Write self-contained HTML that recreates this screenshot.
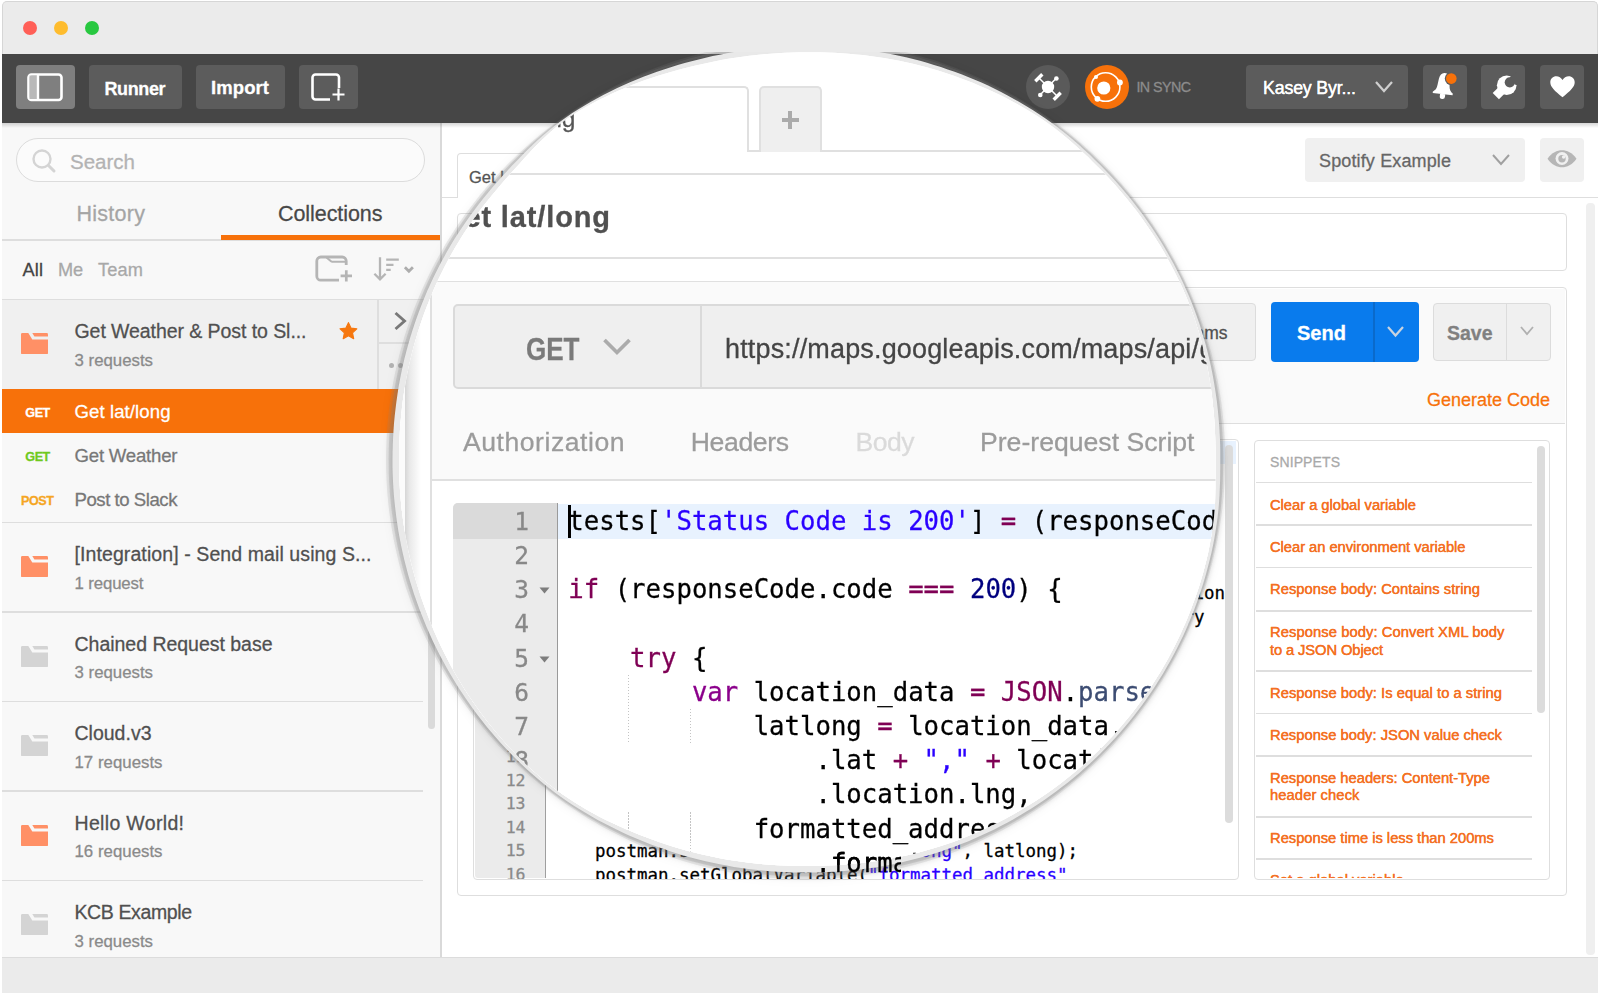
<!DOCTYPE html>
<html lang="en"><head><meta charset="utf-8"><title>Postman</title>
<style>
html,body{margin:0;padding:0;}
body{width:1600px;height:993px;background:#fff;position:relative;overflow:hidden;font-family:"Liberation Sans", sans-serif;}
#base,#magwrap,#mag2,#mag1,#mag,#magin{position:absolute;left:0;top:0;width:1600px;height:993px;}
#base div,#base span.t,#base svg,#magin div,#magin span.t,#magin svg{position:absolute;}
#base div,#magin div{box-sizing:border-box;}
span.t{line-height:1;white-space:pre;-webkit-text-stroke-width:.28px;}
#magclip{position:absolute;left:0;top:52px;width:1600px;height:941px;overflow:hidden;}
#magwrap{top:-52px !important;filter:drop-shadow(1px 1px 2.5px rgba(0,0,0,.14)) drop-shadow(0 1px 5px rgba(0,0,0,.10));}
#mag2{background:rgba(135,135,135,.16);clip-path:path('M1225.2 459.7L1225.1 452.4L1224.9 445.1L1224.6 437.7L1224.2 430.4L1223.6 423.1L1222.9 415.8L1222.1 408.6L1221.1 401.3L1220.0 394.1L1218.8 386.8L1217.5 379.6L1216.0 372.5L1214.4 365.3L1212.7 358.2L1210.9 351.1L1208.9 344.0L1206.9 337.0L1204.7 330.0L1202.3 323.1L1199.9 316.2L1197.3 309.3L1194.6 302.5L1191.8 295.7L1188.9 289.0L1185.9 282.4L1182.7 275.8L1179.5 269.2L1176.1 262.7L1172.6 256.3L1169.0 249.9L1165.3 243.6L1161.4 237.3L1157.5 231.2L1153.5 225.1L1149.3 219.0L1145.1 213.1L1140.7 207.2L1136.2 201.4L1131.7 195.6L1127.0 190.0L1122.3 184.4L1117.4 178.9L1112.5 173.5L1107.4 168.2L1102.3 163.0L1097.1 157.9L1091.8 152.8L1086.4 147.9L1080.9 143.0L1075.3 138.3L1069.7 133.6L1063.9 129.1L1058.1 124.6L1052.2 120.2L1046.3 116.0L1040.2 111.8L1034.1 107.8L1028.0 103.9L1021.7 100.0L1015.4 96.3L1009.0 92.7L1002.6 89.2L996.1 85.8L989.5 82.6L982.9 79.4L976.3 76.4L969.6 73.5L962.8 70.7L956.0 68.0L949.1 65.4L942.2 63.0L935.3 60.6L928.3 58.4L921.3 56.4L914.2 54.4L907.1 52.6L900.0 50.9L892.8 49.3L885.7 47.8L878.5 46.5L871.2 45.3L864.0 44.2L856.7 43.2L849.5 42.4L842.2 41.7L834.9 41.1L827.6 40.7L820.2 40.4L812.9 40.2L805.6 40.1L798.3 40.2L791.0 40.4L783.6 40.7L776.3 41.1L769.0 41.7L761.7 42.4L754.5 43.2L747.2 44.2L740.0 45.3L732.7 46.5L725.5 47.8L718.4 49.3L711.2 50.9L704.1 52.6L697.0 54.4L689.9 56.4L682.9 58.4L675.9 60.6L669.0 63.0L662.1 65.4L655.2 68.0L648.4 70.7L641.6 73.5L634.9 76.4L628.3 79.4L621.7 82.6L615.1 85.8L608.6 89.2L602.2 92.7L595.8 96.3L589.5 100.0L583.2 103.9L577.1 107.8L571.0 111.8L564.9 116.0L559.0 120.2L553.1 124.6L547.3 129.1L541.5 133.6L535.9 138.3L530.3 143.0L524.8 147.9L519.4 152.8L514.1 157.9L508.9 163.0L503.8 168.2L498.7 173.5L493.8 178.9L488.9 184.4L484.2 190.0L479.5 195.6L475.0 201.4L470.5 207.2L466.1 213.1L461.9 219.0L457.7 225.1L453.7 231.2L449.8 237.3L445.9 243.6L442.2 249.9L438.6 256.3L435.1 262.7L431.7 269.2L428.5 275.8L425.3 282.4L422.3 289.0L419.4 295.7L416.6 302.5L413.9 309.3L411.3 316.2L408.9 323.1L406.5 330.0L404.3 337.0L402.3 344.0L400.3 351.1L398.5 358.2L396.8 365.3L395.2 372.5L393.7 379.6L392.4 386.8L391.2 394.1L390.1 401.3L389.1 408.6L388.3 415.8L387.6 423.1L387.0 430.4L386.6 437.7L386.3 445.1L386.1 452.4L386.0 459.7L386.1 467.0L386.3 474.3L386.6 481.7L387.0 489.0L387.6 496.3L388.3 503.6L389.1 510.8L390.1 518.1L391.2 525.3L392.4 532.6L393.7 539.8L395.2 546.9L396.8 554.1L398.5 561.2L400.3 568.3L402.3 575.4L404.3 582.4L406.5 589.4L408.9 596.3L411.3 603.2L413.9 610.1L416.6 616.9L419.4 623.7L422.3 630.4L425.3 637.0L428.5 643.6L431.7 650.2L435.1 656.7L438.6 663.1L442.2 669.5L445.9 675.8L449.8 682.1L453.7 688.2L457.7 694.3L461.9 700.4L466.1 706.3L470.5 712.2L475.0 718.0L479.5 723.8L484.2 729.4L488.9 735.0L493.8 740.5L498.7 745.9L503.8 751.2L508.9 756.4L514.1 761.5L519.4 766.6L524.8 771.5L530.3 776.4L535.9 781.1L541.5 785.8L547.3 790.3L553.1 794.8L559.0 799.2L564.9 803.4L571.0 807.6L577.1 811.6L583.2 815.5L589.5 819.4L595.8 823.1L602.2 826.7L608.6 830.2L615.1 833.6L621.7 836.8L628.3 840.0L634.9 843.0L641.6 845.9L648.4 848.7L655.2 851.4L662.1 854.0L669.0 856.4L675.9 858.8L682.9 861.0L689.9 863.0L697.0 865.0L704.1 866.8L711.2 868.5L718.4 870.1L725.5 871.6L732.7 872.9L740.0 874.1L747.2 875.2L754.5 876.2L761.7 877.0L769.0 877.7L776.3 878.3L783.6 878.7L791.0 879.0L798.3 879.2L805.6 879.3L812.9 879.2L820.2 879.0L827.6 878.7L834.9 878.3L842.2 877.7L849.5 877.0L856.7 876.2L864.0 875.2L871.2 874.1L878.5 872.9L885.7 871.6L892.8 870.1L900.0 868.5L907.1 866.8L914.2 865.0L921.3 863.0L928.3 861.0L935.3 858.8L942.2 856.4L949.1 854.0L956.0 851.4L962.8 848.7L969.6 845.9L976.3 843.0L982.9 840.0L989.5 836.8L996.1 833.6L1002.6 830.2L1009.0 826.7L1015.4 823.1L1021.7 819.4L1028.0 815.5L1034.1 811.6L1040.2 807.6L1046.3 803.4L1052.2 799.2L1058.1 794.8L1063.9 790.3L1069.7 785.8L1075.3 781.1L1080.9 776.4L1086.4 771.5L1091.8 766.6L1097.1 761.5L1102.3 756.4L1107.4 751.2L1112.5 745.9L1117.4 740.5L1122.3 735.0L1127.0 729.4L1131.7 723.8L1136.2 718.0L1140.7 712.2L1145.1 706.3L1149.3 700.4L1153.5 694.3L1157.5 688.2L1161.4 682.1L1165.3 675.8L1169.0 669.5L1172.6 663.1L1176.1 656.7L1179.5 650.2L1182.7 643.6L1185.9 637.0L1188.9 630.4L1191.8 623.7L1194.6 616.9L1197.3 610.1L1199.9 603.2L1202.3 596.3L1204.7 589.4L1206.9 582.4L1208.9 575.4L1210.9 568.3L1212.7 561.2L1214.4 554.1L1216.0 546.9L1217.5 539.8L1218.8 532.6L1220.0 525.3L1221.1 518.1L1222.1 510.8L1222.9 503.6L1223.6 496.3L1224.2 489.0L1224.6 481.7L1224.9 474.3L1225.1 467.0Z');}
#mag1{background:rgba(135,135,135,.24);clip-path:path('M1223.3 459.6L1223.2 452.3L1223.0 445.0L1222.7 437.7L1222.3 430.4L1221.8 423.2L1221.1 415.9L1220.3 408.6L1219.4 401.4L1218.4 394.2L1217.2 387.0L1215.9 379.8L1214.5 372.7L1213.0 365.5L1211.3 358.4L1209.6 351.3L1207.6 344.3L1205.6 337.3L1203.4 330.3L1201.2 323.4L1198.8 316.5L1196.2 309.6L1193.6 302.8L1190.8 296.1L1187.9 289.4L1184.9 282.7L1181.7 276.2L1178.5 269.6L1175.1 263.1L1171.6 256.7L1168.0 250.4L1164.3 244.1L1160.5 237.9L1156.5 231.7L1152.5 225.6L1148.4 219.6L1144.1 213.7L1139.8 207.8L1135.3 202.0L1130.8 196.3L1126.1 190.7L1121.4 185.1L1116.5 179.7L1111.6 174.3L1106.6 169.0L1101.4 163.8L1096.2 158.7L1091.0 153.6L1085.6 148.7L1080.2 143.8L1074.6 139.1L1069.0 134.4L1063.3 129.8L1057.5 125.4L1051.6 121.0L1045.7 116.8L1039.7 112.7L1033.5 108.7L1027.4 104.8L1021.1 101.0L1014.8 97.3L1008.4 93.8L1002.0 90.3L995.5 87.0L989.0 83.8L982.3 80.7L975.7 77.7L969.0 74.9L962.2 72.1L955.4 69.5L948.6 67.0L941.7 64.6L934.8 62.3L927.8 60.2L920.8 58.1L913.8 56.2L906.7 54.5L899.6 52.8L892.5 51.3L885.3 49.9L878.1 48.6L871.0 47.4L863.8 46.4L856.5 45.5L849.3 44.7L842.0 44.0L834.8 43.5L827.5 43.0L820.2 42.7L813.0 42.6L805.7 42.5L798.4 42.6L791.1 42.8L783.9 43.1L776.6 43.5L769.3 44.1L762.1 44.8L754.8 45.6L747.6 46.5L740.4 47.6L733.2 48.7L726.1 50.0L718.9 51.4L711.8 53.0L704.7 54.6L697.7 56.4L690.6 58.3L683.6 60.3L676.6 62.4L669.7 64.7L662.8 67.0L655.9 69.5L649.1 72.1L642.3 74.8L635.6 77.6L628.9 80.6L622.3 83.6L615.8 86.8L609.2 90.1L602.8 93.5L596.4 97.1L590.1 100.7L583.8 104.5L577.6 108.4L571.5 112.4L565.5 116.5L559.5 120.7L553.7 125.1L547.9 129.6L542.3 134.3L536.7 139.0L531.2 143.8L525.8 148.8L520.5 153.8L515.3 158.9L510.2 164.1L505.1 169.3L500.1 174.6L495.2 180.0L490.4 185.5L485.7 191.1L481.1 196.7L476.5 202.4L472.1 208.2L467.8 214.1L463.6 220.0L459.4 226.0L455.4 232.1L451.5 238.3L447.7 244.5L444.0 250.8L440.5 257.1L437.0 263.5L433.7 270.0L430.4 276.5L427.3 283.1L424.3 289.8L421.4 296.5L418.7 303.2L416.0 310.0L413.5 316.8L411.1 323.7L408.8 330.6L406.6 337.5L404.5 344.5L402.6 351.6L400.8 358.6L399.1 365.7L397.6 372.8L396.1 380.0L394.8 387.1L393.7 394.3L392.6 401.5L391.7 408.7L390.9 416.0L390.2 423.2L389.6 430.5L389.2 437.7L388.9 445.0L388.7 452.3L388.6 459.6L388.7 466.8L388.8 474.1L389.1 481.4L389.6 488.7L390.1 495.9L390.8 503.2L391.6 510.4L392.6 517.6L393.6 524.8L394.8 532.0L396.1 539.2L397.5 546.3L399.1 553.4L400.8 560.5L402.6 567.6L404.5 574.6L406.5 581.6L408.7 588.6L411.0 595.5L413.4 602.3L415.9 609.2L418.5 616.0L421.3 622.7L424.2 629.4L427.2 636.1L430.3 642.7L433.5 649.2L436.8 655.7L440.2 662.1L443.8 668.5L447.5 674.8L451.2 681.0L455.1 687.2L459.1 693.3L463.2 699.4L467.4 705.3L471.7 711.2L476.1 717.0L480.7 722.8L485.3 728.4L490.0 734.0L494.8 739.5L499.7 744.9L504.7 750.2L509.8 755.5L515.0 760.6L520.2 765.6L525.6 770.6L531.1 775.5L536.6 780.2L542.3 784.9L548.0 789.4L553.8 793.9L559.7 798.2L565.6 802.4L571.7 806.5L577.8 810.5L584.0 814.4L590.2 818.1L596.5 821.8L602.9 825.3L609.4 828.8L615.9 832.1L622.4 835.3L629.0 838.4L635.7 841.3L642.4 844.2L649.2 846.9L656.0 849.5L662.8 852.1L669.7 854.4L676.6 856.7L683.6 858.9L690.6 860.9L697.6 862.8L704.7 864.6L711.8 866.3L718.9 867.8L726.1 869.2L733.2 870.5L740.4 871.7L747.6 872.7L754.8 873.6L762.1 874.4L769.3 875.1L776.6 875.7L783.9 876.1L791.1 876.4L798.4 876.6L805.7 876.6L813.0 876.6L820.2 876.4L827.5 876.1L834.8 875.7L842.0 875.1L849.3 874.5L856.5 873.7L863.7 872.7L871.0 871.7L878.1 870.5L885.3 869.2L892.5 867.8L899.6 866.3L906.7 864.6L913.7 862.8L920.8 860.9L927.8 858.9L934.7 856.7L941.7 854.5L948.5 852.1L955.4 849.5L962.2 846.9L968.9 844.1L975.6 841.2L982.3 838.2L988.9 835.1L995.4 831.9L1001.9 828.5L1008.3 825.1L1014.7 821.5L1021.0 817.8L1027.2 814.1L1033.4 810.2L1039.5 806.1L1045.5 802.0L1051.4 797.8L1057.3 793.5L1063.1 789.1L1068.8 784.5L1074.5 779.9L1080.1 775.2L1085.5 770.4L1090.9 765.4L1096.2 760.4L1101.4 755.3L1106.6 750.1L1111.6 744.8L1116.5 739.5L1121.4 734.0L1126.1 728.5L1130.8 722.8L1135.3 717.1L1139.8 711.3L1144.1 705.5L1148.4 699.5L1152.5 693.5L1156.5 687.4L1160.5 681.3L1164.3 675.0L1168.0 668.7L1171.6 662.4L1175.1 656.0L1178.4 649.5L1181.7 643.0L1184.8 636.4L1187.9 629.7L1190.8 623.0L1193.6 616.3L1196.2 609.5L1198.8 602.6L1201.2 595.8L1203.5 588.8L1205.7 581.9L1207.8 574.9L1209.7 567.8L1211.5 560.7L1213.2 553.6L1214.8 546.5L1216.2 539.4L1217.5 532.2L1218.7 525.0L1219.7 517.7L1220.6 510.5L1221.3 503.2L1221.9 496.0L1222.4 488.7L1222.8 481.4L1223.1 474.1L1223.2 466.8Z');}
#mag{background:#e9e9e9;clip-path:path('M1220.3 459.4L1220.3 452.1L1220.2 444.9L1219.9 437.6L1219.5 430.4L1219.0 423.2L1218.4 416.0L1217.7 408.8L1216.9 401.6L1215.9 394.4L1214.8 387.2L1213.6 380.1L1212.3 373.0L1210.8 365.8L1209.2 358.8L1207.5 351.7L1205.7 344.7L1203.7 337.7L1201.6 330.7L1199.4 323.8L1197.0 317.0L1194.5 310.1L1191.9 303.3L1189.2 296.6L1186.3 289.9L1183.3 283.3L1180.2 276.8L1176.9 270.2L1173.6 263.8L1170.1 257.4L1166.5 251.1L1162.8 244.8L1159.0 238.6L1155.1 232.5L1151.1 226.5L1146.9 220.5L1142.7 214.6L1138.3 208.8L1133.9 203.0L1129.4 197.3L1124.7 191.7L1120.0 186.2L1115.2 180.8L1110.3 175.4L1105.3 170.2L1100.2 165.0L1095.0 159.9L1089.8 154.8L1084.4 149.9L1079.1 145.0L1073.6 140.2L1068.0 135.6L1062.3 131.0L1056.6 126.5L1050.8 122.2L1044.8 118.0L1038.8 113.9L1032.7 110.0L1026.5 106.2L1020.2 102.4L1013.9 98.9L1007.6 95.4L1001.1 92.0L994.6 88.8L988.1 85.6L981.5 82.6L974.8 79.8L968.1 77.0L961.4 74.3L954.6 71.8L947.7 69.4L940.9 67.1L934.0 64.9L927.0 62.8L920.1 60.8L913.1 59.0L906.0 57.3L899.0 55.7L891.9 54.3L884.8 52.9L877.7 51.7L870.5 50.6L863.4 49.7L856.2 48.8L849.0 48.1L841.8 47.5L834.6 47.0L827.4 46.6L820.2 46.3L813.0 46.2L805.8 46.1L798.6 46.2L791.4 46.4L784.2 46.7L777.0 47.2L769.8 47.7L762.6 48.3L755.4 49.1L748.3 50.0L741.1 51.0L734.0 52.1L726.9 53.3L719.8 54.7L712.7 56.1L705.7 57.7L698.6 59.4L691.6 61.2L684.7 63.1L677.7 65.1L670.8 67.2L663.9 69.4L657.0 71.7L650.2 74.2L643.4 76.8L636.7 79.4L630.0 82.3L623.3 85.2L616.7 88.3L610.2 91.5L603.7 94.8L597.3 98.2L590.9 101.7L584.6 105.4L578.4 109.2L572.3 113.1L566.3 117.2L560.3 121.5L554.5 125.9L548.9 130.5L543.3 135.2L537.9 140.1L532.6 145.0L527.3 150.1L522.2 155.2L517.1 160.4L512.1 165.6L507.1 170.9L502.2 176.3L497.4 181.7L492.7 187.1L488.0 192.7L483.4 198.3L478.9 204.0L474.6 209.7L470.3 215.6L466.1 221.5L462.0 227.4L458.0 233.5L454.1 239.6L450.4 245.8L446.7 252.1L443.2 258.4L439.8 264.8L436.5 271.2L433.3 277.7L430.3 284.2L427.3 290.8L424.5 297.5L421.8 304.2L419.2 310.9L416.7 317.7L414.4 324.6L412.1 331.4L410.0 338.3L408.0 345.3L406.1 352.3L404.3 359.3L402.7 366.3L401.2 373.3L399.8 380.4L398.5 387.5L397.4 394.7L396.4 401.8L395.5 409.0L394.7 416.1L394.0 423.3L393.5 430.5L393.1 437.7L392.8 444.9L392.6 452.1L392.5 459.3L392.5 466.6L392.7 473.8L393.0 481.0L393.4 488.2L393.9 495.4L394.6 502.6L395.4 509.7L396.3 516.9L397.3 524.1L398.4 531.2L399.7 538.3L401.1 545.4L402.6 552.4L404.2 559.5L406.0 566.5L407.8 573.5L409.8 580.4L411.9 587.3L414.1 594.2L416.5 601.0L418.9 607.8L421.5 614.6L424.2 621.3L427.0 628.0L429.9 634.6L432.9 641.2L436.1 647.7L439.3 654.2L442.7 660.6L446.2 667.0L449.8 673.3L453.5 679.5L457.3 685.7L461.2 691.8L465.2 697.8L469.4 703.8L473.6 709.7L477.9 715.5L482.4 721.2L486.9 726.9L491.6 732.5L496.3 738.0L501.2 743.4L506.1 748.8L511.1 754.0L516.3 759.2L521.5 764.3L526.8 769.2L532.2 774.1L537.7 778.8L543.3 783.5L549.0 788.0L554.8 792.4L560.7 796.7L566.7 800.9L572.7 804.9L578.8 808.8L585.0 812.6L591.3 816.3L597.7 819.9L604.1 823.3L610.5 826.6L617.0 829.8L623.6 832.9L630.2 835.9L636.9 838.8L643.6 841.5L650.3 844.2L657.1 846.7L663.9 849.1L670.8 851.5L677.7 853.7L684.6 855.7L691.6 857.7L698.6 859.5L705.6 861.2L712.7 862.8L719.7 864.3L726.8 865.6L733.9 866.9L741.1 868.0L748.2 869.0L755.4 869.8L762.6 870.6L769.8 871.2L777.0 871.7L784.2 872.1L791.4 872.4L798.6 872.6L805.8 872.6L813.0 872.6L820.2 872.4L827.4 872.1L834.6 871.8L841.8 871.2L849.0 870.6L856.2 869.9L863.4 869.0L870.5 868.0L877.7 866.9L884.8 865.7L891.9 864.4L899.0 862.9L906.0 861.3L913.0 859.6L920.0 857.8L927.0 855.8L933.9 853.7L940.8 851.5L947.7 849.1L954.5 846.7L961.2 844.1L968.0 841.4L974.6 838.5L981.2 835.6L987.8 832.5L994.3 829.4L1000.8 826.1L1007.2 822.7L1013.5 819.2L1019.8 815.5L1026.0 811.8L1032.2 808.0L1038.3 804.0L1044.3 800.0L1050.2 795.8L1056.1 791.5L1061.9 787.1L1067.6 782.7L1073.3 778.1L1078.8 773.4L1084.3 768.6L1089.7 763.8L1095.0 758.8L1100.2 753.7L1105.3 748.6L1110.3 743.3L1115.2 738.0L1120.1 732.5L1124.8 727.0L1129.4 721.4L1134.0 715.8L1138.4 710.0L1142.7 704.2L1147.0 698.2L1151.1 692.3L1155.1 686.2L1159.0 680.1L1162.8 673.9L1166.5 667.6L1170.1 661.3L1173.5 654.9L1176.9 648.4L1180.1 641.9L1183.3 635.4L1186.3 628.7L1189.2 622.1L1191.9 615.4L1194.6 608.6L1197.1 601.8L1199.5 594.9L1201.8 588.0L1204.0 581.1L1206.0 574.1L1207.9 567.1L1209.7 560.1L1211.4 553.0L1212.9 545.9L1214.3 538.7L1215.5 531.6L1216.6 524.4L1217.6 517.2L1218.4 510.0L1219.0 502.8L1219.5 495.5L1219.8 488.3L1220.1 481.1L1220.2 473.8L1220.3 466.6Z');}
#magin{background:#fff;clip-path:path('M1215.5 459.0L1215.5 451.9L1215.4 444.7L1215.2 437.6L1214.9 430.4L1214.5 423.3L1214.0 416.1L1213.3 409.0L1212.6 401.9L1211.8 394.7L1210.8 387.6L1209.7 380.5L1208.5 373.4L1207.2 366.4L1205.7 359.3L1204.1 352.3L1202.4 345.3L1200.6 338.4L1198.6 331.4L1196.4 324.6L1194.2 317.7L1191.8 310.9L1189.2 304.2L1186.5 297.5L1183.7 290.8L1180.7 284.3L1177.6 277.7L1174.4 271.3L1171.1 264.9L1167.6 258.5L1164.1 252.3L1160.4 246.1L1156.6 239.9L1152.7 233.9L1148.6 227.9L1144.5 222.0L1140.3 216.1L1136.0 210.3L1131.6 204.7L1127.0 199.0L1122.4 193.5L1117.7 188.0L1112.9 182.6L1108.0 177.3L1103.1 172.1L1098.0 167.0L1092.9 161.9L1087.8 156.8L1082.5 151.9L1077.2 147.0L1071.8 142.2L1066.3 137.5L1060.8 132.9L1055.1 128.5L1049.3 124.2L1043.3 120.0L1037.3 116.0L1031.2 112.2L1025.0 108.5L1018.8 104.9L1012.5 101.4L1006.1 98.0L999.6 94.8L993.1 91.7L986.6 88.7L980.0 85.9L973.3 83.1L966.7 80.5L959.9 78.0L953.2 75.6L946.4 73.3L939.6 71.1L932.7 69.1L925.8 67.1L918.9 65.3L912.0 63.6L905.0 62.0L898.0 60.6L891.0 59.2L883.9 58.0L876.9 56.9L869.8 56.0L862.8 55.1L855.7 54.4L848.6 53.7L841.5 53.2L834.4 52.8L827.3 52.5L820.2 52.3L813.1 52.2L806.0 52.2L798.9 52.3L791.8 52.5L784.7 52.8L777.6 53.2L770.5 53.7L763.5 54.3L756.4 55.0L749.3 55.8L742.3 56.7L735.2 57.7L728.2 58.8L721.2 60.1L714.2 61.4L707.2 62.9L700.3 64.4L693.3 66.1L686.4 67.8L679.5 69.6L672.6 71.5L665.7 73.4L658.8 75.5L652.0 77.7L645.1 80.1L638.4 82.5L631.7 85.1L625.0 87.9L618.4 90.7L611.8 93.8L605.3 96.9L598.8 100.1L592.4 103.4L586.0 106.9L579.8 110.6L573.6 114.5L567.6 118.5L561.7 122.8L556.0 127.3L550.5 132.0L545.1 136.9L539.9 141.9L534.8 147.0L529.8 152.3L524.9 157.6L520.1 162.9L515.3 168.3L510.5 173.6L505.7 179.0L501.0 184.4L496.4 189.9L491.8 195.4L487.3 201.0L482.9 206.6L478.6 212.3L474.4 218.1L470.3 223.9L466.2 229.8L462.3 235.8L458.5 241.9L454.8 248.0L451.3 254.2L447.8 260.5L444.5 266.8L441.3 273.2L438.2 279.6L435.3 286.1L432.4 292.7L429.7 299.3L427.0 305.9L424.5 312.6L422.1 319.3L419.9 326.0L417.7 332.8L415.7 339.7L413.7 346.5L411.9 353.4L410.2 360.3L408.6 367.3L407.2 374.2L405.9 381.2L404.7 388.2L403.6 395.3L402.6 402.3L401.8 409.4L401.1 416.4L400.4 423.5L399.9 430.6L399.6 437.7L399.3 444.8L399.1 451.9L399.0 459.0L399.0 466.1L399.2 473.2L399.4 480.3L399.8 487.4L400.3 494.5L400.9 501.6L401.6 508.7L402.5 515.7L403.4 522.8L404.5 529.8L405.7 536.8L407.0 543.8L408.4 550.8L409.9 557.7L411.6 564.7L413.4 571.6L415.3 578.5L417.3 585.3L419.4 592.1L421.7 598.9L424.0 605.6L426.5 612.3L429.1 619.0L431.7 625.6L434.5 632.2L437.4 638.8L440.4 645.3L443.6 651.7L446.8 658.1L450.1 664.5L453.6 670.7L457.2 677.0L460.8 683.1L464.6 689.3L468.5 695.3L472.6 701.3L476.7 707.1L480.9 713.0L485.3 718.7L489.7 724.4L494.3 730.0L498.9 735.5L503.6 741.0L508.4 746.4L513.4 751.6L518.4 756.8L523.5 761.9L528.8 766.9L534.1 771.8L539.6 776.5L545.1 781.2L550.8 785.7L556.5 790.0L562.4 794.3L568.4 798.3L574.5 802.3L580.6 806.1L586.8 809.7L593.1 813.3L599.5 816.7L605.9 819.9L612.4 823.1L618.9 826.1L625.5 829.0L632.2 831.8L638.8 834.5L645.5 837.1L652.2 839.6L659.0 842.0L665.8 844.3L672.6 846.5L679.4 848.5L686.3 850.5L693.2 852.3L700.2 854.0L707.1 855.6L714.1 857.1L721.1 858.4L728.1 859.7L735.2 860.8L742.2 861.8L749.3 862.7L756.3 863.5L763.4 864.2L770.5 864.7L777.6 865.2L784.7 865.5L791.8 865.8L798.9 866.0L806.0 866.0L813.1 866.0L820.2 865.8L827.3 865.6L834.4 865.2L841.5 864.8L848.6 864.2L855.7 863.6L862.8 862.8L869.8 862.0L876.9 861.0L883.9 859.9L890.9 858.6L898.0 857.3L904.9 855.8L911.9 854.2L918.8 852.5L925.7 850.6L932.6 848.6L939.4 846.5L946.2 844.3L953.0 841.9L959.7 839.4L966.4 836.8L973.0 834.1L979.6 831.2L986.1 828.2L992.6 825.2L999.0 822.0L1005.4 818.7L1011.7 815.3L1017.9 811.7L1024.1 808.1L1030.3 804.3L1036.3 800.5L1042.3 796.5L1048.2 792.4L1054.1 788.2L1059.9 783.9L1065.6 779.6L1071.2 775.1L1076.7 770.4L1082.2 765.7L1087.6 760.9L1092.8 756.0L1098.0 751.0L1103.1 745.9L1108.1 740.7L1113.1 735.5L1117.9 730.1L1122.6 724.6L1127.2 719.1L1131.7 713.5L1136.1 707.8L1140.4 702.0L1144.6 696.1L1148.7 690.2L1152.7 684.2L1156.6 678.1L1160.4 671.9L1164.0 665.7L1167.6 659.4L1171.0 653.1L1174.3 646.7L1177.5 640.2L1180.6 633.7L1183.6 627.1L1186.5 620.5L1189.2 613.8L1191.8 607.1L1194.3 600.3L1196.7 593.5L1199.0 586.7L1201.1 579.8L1203.1 572.9L1204.9 565.9L1206.7 558.9L1208.3 551.9L1209.7 544.8L1211.0 537.7L1212.2 530.6L1213.2 523.5L1214.1 516.3L1214.7 509.2L1215.1 502.0L1215.3 494.8L1215.5 487.6L1215.5 480.5L1215.5 473.3L1215.5 466.1Z');}
#over{position:absolute;left:800px;top:846px;width:101px;height:32.5px;overflow:hidden;}
#over span.t{position:absolute;}
</style></head>
<body>
<div id="base">
<div style="left:1.5px;top:0.5px;width:1596.5px;height:993px;background:#ebebeb;border-radius:5px 5px 0 0;border:1px solid #d6d6d6;border-bottom:none;"></div>
<div style="left:22.6px;top:21px;width:14px;height:14px;background:#ff5f57;border-radius:50%;"></div>
<div style="left:54px;top:21px;width:14px;height:14px;background:#febc2e;border-radius:50%;"></div>
<div style="left:85px;top:21px;width:14px;height:14px;background:#28c840;border-radius:50%;"></div>
<div style="left:2px;top:122px;width:1596px;height:836px;background:#fff;"></div>
<div style="left:2px;top:122px;width:438px;height:836px;background:#f8f8f8;"></div>
<div style="left:440px;top:122px;width:1.5px;height:836px;background:#d9d9d9;"></div>
<div style="left:2px;top:54px;width:1596px;height:68.5px;background:#464646;"></div>
<div style="left:2px;top:122.5px;width:1596px;height:5px;background:linear-gradient(rgba(0,0,0,.16),rgba(0,0,0,0));"></div>
<div style="left:15.5px;top:65px;width:59px;height:44px;background:#7f7f7f;border-radius:4px;"></div>
<div style="left:89px;top:65px;width:93px;height:44px;background:#5c5c5c;border-radius:4px;"></div>
<div style="left:196px;top:65px;width:88.5px;height:44px;background:#5c5c5c;border-radius:4px;"></div>
<div style="left:299px;top:65px;width:59px;height:44px;background:#5c5c5c;border-radius:4px;"></div>
<svg style="left:26px;top:72px;" width="38" height="30" viewBox="0 0 38 30"><rect x="2.5" y="2.5" width="33" height="25.5" rx="3" fill="none" stroke="#fff" stroke-width="2.6"/><rect x="3.5" y="3.5" width="8" height="23.5" fill="#b9b9b9"/><path d="M12 3 V27.5" stroke="#fff" stroke-width="2.4"/></svg>
<span class="t" style="top:79.76px;font-size:18px;color:#fff;font-weight:700;letter-spacing:-0.400px;left:104.5px;">Runner</span>
<span class="t" style="top:79.34px;font-size:18.5px;color:#fff;font-weight:700;letter-spacing:0.087px;left:211px;">Import</span>
<svg style="left:309px;top:72px;" width="40" height="32" viewBox="0 0 40 32"><path d="M30 16 V5.5 a3 3 0 0 0 -3 -3 H6.5 a3 3 0 0 0 -3 3 V24.5 a3 3 0 0 0 3 3 H21" fill="none" stroke="#fff" stroke-width="2.6"/><path d="M29.5 16.5 V28.5 M23.5 22.5 H35.5" stroke="#fff" stroke-width="2.2"/></svg>
<div style="left:1025.6px;top:65px;width:44px;height:44px;background:#5a5a5a;border-radius:50%;"></div>
<svg style="left:1025.6px;top:65px;" width="44" height="44" viewBox="0 0 44 44"><g stroke="#fff" stroke-width="1.5" fill="none"><path d="M13.5 13.5 L30.5 30.5 M30 13.5 L14 30"/></g><circle cx="22" cy="22" r="6.2" fill="#fff"/><g stroke="#fff" stroke-width="3.4"><path d="M9.3 16.3 L16.3 9.3"/><path d="M27.700 34.700 L34.700 27.700"/></g><circle cx="30.400" cy="13.500" r="2.300" fill="#fff"/><circle cx="14.300" cy="30" r="2.300" fill="#fff"/></svg>
<div style="left:1084.6px;top:65px;width:44px;height:44px;background:#f7710a;border-radius:50%;"></div>
<svg style="left:1084.6px;top:65px;" width="44" height="44" viewBox="0 0 44 44"><circle cx="20.600" cy="22" r="14.300" fill="none" stroke="#fff" stroke-width="1.600"/><circle cx="18.800" cy="23" r="6.600" fill="#fff"/><circle cx="34.900" cy="17.500" r="2.900" fill="#fff"/><circle cx="12.400" cy="33.800" r="2.900" fill="#fff"/><circle cx="11" cy="12" r="2" fill="#fff"/></svg>
<span class="t" style="top:80.10px;font-size:14.3px;color:#8c8c8c;letter-spacing:-0.567px;left:1136.4px;">IN SYNC</span>
<div style="left:1246px;top:65px;width:162px;height:44px;background:#5c5c5c;border-radius:4px;"></div>
<span class="t" style="top:80.13px;font-size:17.8px;color:#fff;letter-spacing:-0.170px;left:1263px;text-shadow:0 0 .6px #fff;">Kasey Byr...</span>
<svg style="left:1374px;top:79.5px;" width="20" height="13" viewBox="0 0 20 13"><path d="M2 2 L10.0 11 L18 2" fill="none" stroke="#cfcfcf" stroke-width="2.2"/></svg>
<div style="left:1422.5px;top:65px;width:44.5px;height:44px;background:#5c5c5c;border-radius:4px;"></div>
<div style="left:1481px;top:65px;width:44px;height:44px;background:#5c5c5c;border-radius:4px;"></div>
<div style="left:1540px;top:65px;width:44px;height:44px;background:#5c5c5c;border-radius:4px;"></div>
<svg style="left:1430px;top:70px;" width="30" height="32" viewBox="0 0 30 32"><g transform="rotate(6 13.500 16)"><path d="M13.500 3 C10.500 3 8.800 5.300 8.200 9 C7.500 13.500 7.600 17.500 6.400 19.500 C5.600 20.900 4.500 21.800 3.500 22.600 V24.200 H23.500 V22.600 C22.500 21.800 21.400 20.900 20.600 19.500 C19.400 17.500 19.500 13.500 18.800 9 C18.200 5.300 16.500 3 13.500 3 Z" fill="#fff"/><path d="M10.900 24 H16.100 V26.500 A2.600 2.600 0 0 1 10.900 26.500 Z" fill="#fff"/></g><circle cx="21.300" cy="8.600" r="6.500" fill="#5c5c5c"/><circle cx="21.300" cy="8.600" r="5.300" fill="#f7710a"/></svg>
<svg style="left:1488px;top:72px;" width="32" height="30" viewBox="0 0 32 30"><path d="M18.700 13.300 L7.800 24.200" stroke="#fff" stroke-width="8.800" fill="none"/><circle cx="18.700" cy="13.300" r="9.800" fill="#fff"/><circle cx="21.800" cy="10.300" r="5.100" fill="#5c5c5c"/><path d="M21.600 5.200 L33 -3 L33 14.500 L26.800 12.500 Z" fill="#5c5c5c"/></svg>
<svg style="left:1549.8px;top:76.4px;" width="25" height="21.5" viewBox="0 0 25 21.5"><path d="M12.500 21.300 C4.500 14.800 0.300 11 0.300 6.300 C0.300 2.800 3 0.300 6.300 0.300 C8.800 0.300 11.200 1.700 12.500 4 C13.800 1.700 16.200 0.300 18.700 0.300 C22 0.300 24.700 2.800 24.700 6.300 C24.700 11 20.500 14.800 12.500 21.300 Z" fill="#fff"/></svg>
<div style="left:16px;top:138px;width:409px;height:43.5px;background:#fbfbfb;border:1.5px solid #dcdcdc;border-radius:22px;"></div>
<svg style="left:30px;top:147px;" width="28" height="28" viewBox="0 0 28 28"><circle cx="12" cy="12" r="8.500" fill="none" stroke="#d4d4d4" stroke-width="2.4"/><path d="M18.500 18.500 L24 24" stroke="#d4d4d4" stroke-width="3" stroke-linecap="round"/></svg>
<span class="t" style="top:151.75px;font-size:20.5px;color:#b3b3b3;letter-spacing:0.006px;left:70px;">Search</span>
<span class="t" style="top:204.00px;font-size:21.5px;color:#a5a5a5;letter-spacing:0.266px;left:76.5px;">History</span>
<span class="t" style="top:204.00px;font-size:21.5px;color:#484848;letter-spacing:-0.067px;left:278px;">Collections</span>
<div style="left:2px;top:239px;width:438px;height:1.5px;background:#dedede;"></div>
<div style="left:221px;top:235px;width:219px;height:4.5px;background:#f7710a;"></div>
<span class="t" style="top:260.99px;font-size:18.2px;color:#444;letter-spacing:0.141px;left:22.5px;">All</span>
<span class="t" style="top:260.99px;font-size:18.2px;color:#a8a8a8;letter-spacing:-0.266px;left:58px;">Me</span>
<span class="t" style="top:260.99px;font-size:18.2px;color:#a8a8a8;letter-spacing:0.172px;left:98px;">Team</span>
<svg style="left:300px;top:245px;" width="130" height="50" viewBox="0 0 130 50"><g transform="translate(-300 -245)" fill="none" stroke="#b5b5b5"><path d="M346.200 265 V261 a4 4 0 0 0 -4 -4 H320.800 a4 4 0 0 0 -4 4 V276.200 a4 4 0 0 0 4 4 H339" stroke-width="2.800"/><path d="M326.500 257.500 L331 261.300 a2 2 0 0 0 1.300 .5 H346" stroke-width="2.100"/><path d="M346.300 270.200 V281.600 M340.600 275.900 H352" stroke-width="2.700"/><path d="M380 257.200 V279 M374.400 273.700 L380 279.300 L385.600 273.700" stroke-width="2.300"/><path d="M386.200 259.600 H398.800 M386.200 264.800 H393.500 M386.200 269.800 H390.700" stroke-width="2.300"/><path d="M404.900 267.300 L408.900 271.300 L412.900 267.300" stroke-width="2.800" stroke="#adadad"/></g></svg>
<div style="left:2px;top:298.5px;width:438px;height:1.5px;background:#dedede;"></div>
<div style="left:2px;top:300px;width:438px;height:89px;background:#f0f0f0;"></div>
<svg style="left:21.2px;top:333.3px;" width="27" height="21.2" viewBox="0 0 27 21.2"><path d="M0 1.300 a1.300 1.300 0 0 1 1.300 -1.300 H7.300 L11.300 6.600 H27 V19.900 a1.300 1.300 0 0 1 -1.300 1.300 H1.300 a1.300 1.300 0 0 1 -1.300 -1.300 Z" fill="#ff9066"/><path d="M11.300 0 H25.700 a1.300 1.300 0 0 1 1.300 1.300 V3.600 H13.400 Z" fill="#ff9066"/></svg>
<span class="t" style="top:322.39px;font-size:19.5px;color:#505050;letter-spacing:-0.067px;left:74.5px;">Get Weather &amp; Post to Sl...</span>
<span class="t" style="top:352.68px;font-size:16.8px;color:#8a8a8a;letter-spacing:0.016px;left:74.5px;">3 requests</span>
<svg style="left:338px;top:320px;" width="21" height="21" viewBox="0 0 21 21"><path transform="translate(1 1.300) scale(0.9)" d="M10.500 1.500 L13.300 7.500 L19.800 8.300 L15 12.800 L16.300 19.300 L10.500 16.100 L4.700 19.300 L6 12.800 L1.200 8.300 L7.700 7.500 Z" fill="#f6770f" stroke="#f6770f" stroke-width="1.300" stroke-linejoin="round"/></svg>
<div style="left:377px;top:300px;width:1.5px;height:89px;background:#dedede;"></div>
<div style="left:378px;top:342px;width:62px;height:1.5px;background:#dedede;"></div>
<svg style="left:392px;top:310px;" width="16" height="22" viewBox="0 0 16 22"><path d="M3.500 3 L12.500 11 L3.500 19" fill="none" stroke="#787878" stroke-width="2.900"/></svg>
<div style="left:388.90000000000003px;top:362.8px;width:5.4px;height:5.4px;background:#b2b2b2;border-radius:50%;"></div>
<div style="left:397.6px;top:362.8px;width:5.4px;height:5.4px;background:#b2b2b2;border-radius:50%;"></div>
<div style="left:406.3px;top:362.8px;width:5.4px;height:5.4px;background:#b2b2b2;border-radius:50%;"></div>
<div style="left:2px;top:389px;width:438px;height:44px;background:#f7710a;"></div>
<span class="t" style="top:406.93px;font-size:12.6px;color:#fff;font-weight:700;letter-spacing:-0.445px;left:25.3px;">GET</span>
<span class="t" style="top:403.36px;font-size:18.6px;color:#fff;letter-spacing:0.082px;left:74.5px;">Get lat/long</span>
<span class="t" style="top:450.93px;font-size:12.6px;color:#6fc91d;font-weight:700;letter-spacing:-0.445px;left:25.3px;">GET</span>
<span class="t" style="top:447.36px;font-size:18.6px;color:#777;letter-spacing:-0.208px;left:74.5px;">Get Weather</span>
<span class="t" style="top:494.93px;font-size:12.6px;color:#f5a623;font-weight:700;letter-spacing:-0.432px;left:21px;">POST</span>
<span class="t" style="top:491.36px;font-size:18.6px;color:#777;letter-spacing:-0.460px;left:74.5px;">Post to Slack</span>
<div style="left:2px;top:521.5px;width:438px;height:1.5px;background:#dedede;"></div>
<svg style="left:21.2px;top:556.0px;" width="27" height="21.2" viewBox="0 0 27 21.2"><path d="M0 1.300 a1.300 1.300 0 0 1 1.300 -1.300 H7.300 L11.300 6.600 H27 V19.900 a1.300 1.300 0 0 1 -1.300 1.300 H1.300 a1.300 1.300 0 0 1 -1.300 -1.300 Z" fill="#ff9066"/><path d="M11.300 0 H25.700 a1.300 1.300 0 0 1 1.300 1.300 V3.600 H13.400 Z" fill="#ff9066"/></svg>
<span class="t" style="top:545.39px;font-size:19.5px;color:#505050;letter-spacing:0.093px;left:74.5px;">[Integration] - Send mail using S...</span>
<span class="t" style="top:575.68px;font-size:16.8px;color:#8a8a8a;letter-spacing:-0.121px;left:74.5px;">1 request</span>
<div style="left:2px;top:611.0px;width:421px;height:1.5px;background:#dedede;"></div>
<svg style="left:21.2px;top:645.5px;" width="27" height="21.2" viewBox="0 0 27 21.2"><path d="M0 1.300 a1.300 1.300 0 0 1 1.300 -1.300 H7.300 L11.300 6.600 H27 V19.900 a1.300 1.300 0 0 1 -1.300 1.300 H1.300 a1.300 1.300 0 0 1 -1.300 -1.300 Z" fill="#d4d4d4"/><path d="M11.300 0 H25.700 a1.300 1.300 0 0 1 1.300 1.300 V3.600 H13.400 Z" fill="#d4d4d4"/></svg>
<span class="t" style="top:634.89px;font-size:19.5px;color:#505050;letter-spacing:-0.021px;left:74.5px;">Chained Request base</span>
<span class="t" style="top:665.18px;font-size:16.8px;color:#8a8a8a;letter-spacing:0.016px;left:74.5px;">3 requests</span>
<div style="left:2px;top:700.5px;width:421px;height:1.5px;background:#dedede;"></div>
<svg style="left:21.2px;top:735.0px;" width="27" height="21.2" viewBox="0 0 27 21.2"><path d="M0 1.300 a1.300 1.300 0 0 1 1.300 -1.300 H7.300 L11.300 6.600 H27 V19.900 a1.300 1.300 0 0 1 -1.300 1.300 H1.300 a1.300 1.300 0 0 1 -1.300 -1.300 Z" fill="#d4d4d4"/><path d="M11.300 0 H25.700 a1.300 1.300 0 0 1 1.300 1.300 V3.600 H13.400 Z" fill="#d4d4d4"/></svg>
<span class="t" style="top:724.39px;font-size:19.5px;color:#505050;letter-spacing:0.004px;left:74.5px;">Cloud.v3</span>
<span class="t" style="top:754.68px;font-size:16.8px;color:#8a8a8a;letter-spacing:0.030px;left:74.5px;">17 requests</span>
<div style="left:2px;top:790.0px;width:421px;height:1.5px;background:#dedede;"></div>
<svg style="left:21.2px;top:824.5px;" width="27" height="21.2" viewBox="0 0 27 21.2"><path d="M0 1.300 a1.300 1.300 0 0 1 1.300 -1.300 H7.300 L11.300 6.600 H27 V19.900 a1.300 1.300 0 0 1 -1.300 1.300 H1.300 a1.300 1.300 0 0 1 -1.300 -1.300 Z" fill="#ff9066"/><path d="M11.300 0 H25.700 a1.300 1.300 0 0 1 1.300 1.300 V3.600 H13.400 Z" fill="#ff9066"/></svg>
<span class="t" style="top:813.89px;font-size:19.5px;color:#505050;letter-spacing:0.332px;left:74.5px;">Hello World!</span>
<span class="t" style="top:844.18px;font-size:16.8px;color:#8a8a8a;letter-spacing:0.030px;left:74.5px;">16 requests</span>
<div style="left:2px;top:879.5px;width:421px;height:1.5px;background:#dedede;"></div>
<svg style="left:21.2px;top:914.0px;" width="27" height="21.2" viewBox="0 0 27 21.2"><path d="M0 1.300 a1.300 1.300 0 0 1 1.300 -1.300 H7.300 L11.300 6.600 H27 V19.900 a1.300 1.300 0 0 1 -1.300 1.300 H1.300 a1.300 1.300 0 0 1 -1.300 -1.300 Z" fill="#d4d4d4"/><path d="M11.300 0 H25.700 a1.300 1.300 0 0 1 1.300 1.300 V3.600 H13.400 Z" fill="#d4d4d4"/></svg>
<span class="t" style="top:903.39px;font-size:19.5px;color:#505050;letter-spacing:-0.389px;left:74.5px;">KCB Example</span>
<span class="t" style="top:933.68px;font-size:16.8px;color:#8a8a8a;letter-spacing:0.016px;left:74.5px;">3 requests</span>
<div style="left:428px;top:300px;width:6.5px;height:429px;background:#dadada;border-radius:4px;"></div>
<div style="left:442px;top:196.5px;width:1155.5px;height:1.5px;background:#dedede;"></div>
<div style="left:457px;top:153px;width:300px;height:45px;background:#fff;border:1.500px solid #dedede;border-bottom:none;border-radius:4px 4px 0 0;"></div>
<span class="t" style="top:168.63px;font-size:16.5px;color:#555;left:469px;">Get lat/long</span>
<div style="left:1305px;top:138px;width:220px;height:44px;background:#f0f0f0;border-radius:4px;"></div>
<span class="t" style="top:152.36px;font-size:18px;color:#666;letter-spacing:0.138px;left:1319px;">Spotify Example</span>
<svg style="left:1491px;top:153px;" width="20" height="13" viewBox="0 0 20 13"><path d="M2 2 L10.0 11 L18 2" fill="none" stroke="#a0a0a0" stroke-width="2"/></svg>
<div style="left:1540px;top:138px;width:44px;height:44px;background:#f0f0f0;border-radius:4px;"></div>
<svg style="left:1547.4px;top:150.4px;" width="30" height="17.5" viewBox="0 0 30 17.5"><path d="M0.500 8.700 C5 2.500 10 0.300 15 0.300 C20 0.300 25 2.500 29.500 8.700 C25 15 20 17.200 15 17.200 C10 17.200 5 15 0.500 8.700 Z" fill="#b6b6b6"/><circle cx="15" cy="8.500" r="6.500" fill="#f0f0f0"/><circle cx="15" cy="8.700" r="3.700" fill="#b6b6b6"/><circle cx="16.600" cy="7" r="1.700" fill="#f0f0f0"/></svg>
<div style="left:1586px;top:203px;width:8.5px;height:752px;background:#efefef;border-radius:4px;"></div>
<div style="left:457px;top:213px;width:1109.5px;height:58px;background:#fff;border:1.500px solid #dedede;border-radius:4px;"></div>
<div style="left:457px;top:287px;width:1109.5px;height:608.5px;background:#fff;border:1.500px solid #dedede;border-radius:4px;"></div>
<div style="left:458.5px;top:288.5px;width:1106.5px;height:135px;background:#fafafa;border-bottom:1.500px solid #dedede;"></div>
<div style="left:1000px;top:303px;width:255.5px;height:58px;background:#f0f0f0;border:1.500px solid #dcdcdc;border-radius:4px;"></div>
<span class="t" style="top:324.79px;font-size:17.5px;color:#505050;right:372.50px;">Params</span>
<div style="left:1271px;top:302px;width:147.5px;height:59.5px;background:#097bed;border-radius:4px;"></div>
<div style="left:1373px;top:302px;width:1.5px;height:59.5px;background:#0a6acb;"></div>
<span class="t" style="top:323.17px;font-size:20px;color:#fff;font-weight:700;letter-spacing:0.031px;left:1297px;">Send</span>
<svg style="left:1386px;top:325px;" width="19" height="12.5" viewBox="0 0 19 12.5"><path d="M2 2 L9.5 10.5 L17 2" fill="none" stroke="#c9d3df" stroke-width="2.2"/></svg>
<div style="left:1433px;top:303px;width:117.5px;height:58px;background:#f0f0f0;border:1.500px solid #dcdcdc;border-radius:4px;"></div>
<div style="left:1505.5px;top:304px;width:1.5px;height:56px;background:#dcdcdc;"></div>
<span class="t" style="top:324.09px;font-size:19.5px;color:#808080;font-weight:700;letter-spacing:-0.016px;left:1447px;">Save</span>
<svg style="left:1518.5px;top:324.5px;" width="16" height="11" viewBox="0 0 16 11"><path d="M2 2 L8.0 9 L14 2" fill="none" stroke="#b0b0b0" stroke-width="1.8"/></svg>
<span class="t" style="top:391.36px;font-size:18px;color:#f7710a;letter-spacing:-0.008px;right:50.01px;">Generate Code</span>
<div style="left:473px;top:439px;width:765.5px;height:440.5px;background:#fff;border:1.500px solid #dedede;border-radius:4px;overflow:hidden;"></div>
<div style="left:474.5px;top:440.5px;width:71.5px;height:437.5px;background:#ebebeb;border-right:1px solid #9f9f9f;border-radius:3px 0 0 3px;"></div>
<div style="left:546px;top:440.5px;width:690px;height:23px;background:#e8f2fe;"></div>
<div style="left:474.500px;top:745px;width:762px;height:133.500px;overflow:hidden;">
<span class="t" style="right:711px;top:4.44px;font-size:16.500px;color:#8a8a8a;font-family:'DejaVu Sans Mono',monospace;">11</span>
<span class="t" style="right:711px;top:28.19px;font-size:16.500px;color:#8a8a8a;font-family:'DejaVu Sans Mono',monospace;">12</span>
<span class="t" style="right:711px;top:51.44px;font-size:16.500px;color:#8a8a8a;font-family:'DejaVu Sans Mono',monospace;">13</span>
<span class="t" style="right:711px;top:74.94px;font-size:16.500px;color:#8a8a8a;font-family:'DejaVu Sans Mono',monospace;">14</span>
<span class="t" style="right:711px;top:98.44px;font-size:16.500px;color:#8a8a8a;font-family:'DejaVu Sans Mono',monospace;">15</span>
<span class="t" style="right:711px;top:122.44px;font-size:16.500px;color:#8a8a8a;font-family:'DejaVu Sans Mono',monospace;">16</span>
<span class="t" style="left:78.5px;top:97.64px;font-size:17.450px;color:#000;font-family:'DejaVu Sans Mono',monospace;">    postman.setGlobalVariable(<span style="color:#2a00ff">"latlong"</span>, latlong);</span>
<span class="t" style="left:78.5px;top:121.64px;font-size:17.450px;color:#000;font-family:'DejaVu Sans Mono',monospace;">    postman.setGlobalVariable(<span style="color:#2a00ff">"formatted_address"</span></span>
</div>
<div style="left:1150px;top:575px;width:74.500px;height:60px;overflow:hidden;"><span class="t" style="left:43.500px;top:10.14px;font-size:17.450px;color:#000;font-family:'DejaVu Sans Mono',monospace;">ion</span><span class="t" style="left:33.500px;top:34.14px;font-size:17.450px;color:#000;font-family:'DejaVu Sans Mono',monospace;">ry</span></div>
<div style="left:1225px;top:445px;width:7.5px;height:378px;background:#dcdcdc;border-radius:4px;"></div>
<div style="left:1254px;top:439.5px;width:296px;height:440px;background:#fff;border:1.500px solid #dedede;border-radius:4px;"></div>
<div style="left:1536.5px;top:445.5px;width:8px;height:267px;background:#dcdcdc;border-radius:4px;"></div>
<span class="t" style="top:455.25px;font-size:14px;color:#a9a9a9;letter-spacing:0.107px;left:1270px;">SNIPPETS</span>
<div style="left:1255.500px;top:441px;width:293px;height:437px;overflow:hidden;">
<div style="left:0;top:40.69999999999999px;width:276px;height:1.500px;background:#dedede;"></div>
<div style="left:0;top:83.29999999999995px;width:276px;height:1.500px;background:#dedede;"></div>
<div style="left:0;top:125.5px;width:276px;height:1.500px;background:#dedede;"></div>
<div style="left:0;top:169px;width:276px;height:1.500px;background:#dedede;"></div>
<div style="left:0;top:229px;width:276px;height:1.500px;background:#dedede;"></div>
<div style="left:0;top:271.70000000000005px;width:276px;height:1.500px;background:#dedede;"></div>
<div style="left:0;top:314.4px;width:276px;height:1.500px;background:#dedede;"></div>
<div style="left:0;top:375px;width:276px;height:1.500px;background:#dedede;"></div>
<div style="left:0;top:417.4px;width:276px;height:1.500px;background:#dedede;"></div>
</div>
<span class="t" style="top:497.51px;font-size:14.75px;color:#f47023;letter-spacing:-0.035px;left:1270px;text-shadow:0 0 .4px #f47023;">Clear a global variable</span>
<span class="t" style="top:539.81px;font-size:14.75px;color:#f47023;letter-spacing:-0.046px;left:1270px;text-shadow:0 0 .4px #f47023;">Clear an environment variable</span>
<span class="t" style="top:582.41px;font-size:14.75px;color:#f47023;letter-spacing:0.031px;left:1270px;text-shadow:0 0 .4px #f47023;">Response body: Contains string</span>
<span class="t" style="top:625.11px;font-size:14.75px;color:#f47023;letter-spacing:0.073px;left:1270px;text-shadow:0 0 .4px #f47023;">Response body: Convert XML body</span>
<span class="t" style="top:642.81px;font-size:14.75px;color:#f47023;letter-spacing:-0.119px;left:1270px;text-shadow:0 0 .4px #f47023;">to a JSON Object</span>
<span class="t" style="top:685.61px;font-size:14.75px;color:#f47023;letter-spacing:0.023px;left:1270px;text-shadow:0 0 .4px #f47023;">Response body: Is equal to a string</span>
<span class="t" style="top:728.31px;font-size:14.75px;color:#f47023;letter-spacing:-0.001px;left:1270px;text-shadow:0 0 .4px #f47023;">Response body: JSON value check</span>
<span class="t" style="top:770.61px;font-size:14.75px;color:#f47023;letter-spacing:-0.020px;left:1270px;text-shadow:0 0 .4px #f47023;">Response headers: Content-Type</span>
<span class="t" style="top:788.31px;font-size:14.75px;color:#f47023;letter-spacing:0.085px;left:1270px;text-shadow:0 0 .4px #f47023;">header check</span>
<span class="t" style="top:831.11px;font-size:14.75px;color:#f47023;letter-spacing:-0.021px;left:1270px;text-shadow:0 0 .4px #f47023;">Response time is less than 200ms</span>
<div style="left:1255.500px;top:860px;width:276px;height:18px;overflow:hidden;">
<span class="t" style="left:14.500px;top:13.01px;font-size:14.75px;color:#f47023;text-shadow:0 0 .4px #f47023;">Set a global variable</span>
</div>
<div style="left:2px;top:957px;width:1596px;height:36px;background:#ebebeb;border-top:1px solid #dcdcdc;"></div>
</div>
<div id="magclip"><div id="magwrap"><div id="mag2"><div id="mag1"><div id="mag"><div id="magin">
<div style="left:380px;top:40px;width:860px;height:850px;background:#fff;"></div>
<div style="left:748px;top:150px;width:500px;height:2px;background:#e0e0e0;"></div>
<div style="left:380px;top:86px;width:369px;height:66px;background:#fff;border:2px solid #e0e0e0;border-bottom:none;border-radius:5px 5px 0 0;"></div>
<div style="left:759px;top:86px;width:62.5px;height:66px;background:#efefef;border:2px solid #e0e0e0;border-bottom:none;border-radius:5px 5px 0 0;"></div>
<div style="left:781.5px;top:117.8px;width:17.5px;height:4px;background:#ababab;"></div>
<div style="left:788.3px;top:111px;width:4px;height:17.5px;background:#ababab;"></div>
<span class="t" style="top:106.86px;font-size:24.5px;color:#555;right:1024.50px;">Get lat/long</span>
<div style="left:380px;top:173px;width:900px;height:85.5px;background:#fff;border-top:2px solid #e0e0e0;border-bottom:2px solid #e0e0e0;"></div>
<span class="t" style="top:202.65px;font-size:29px;color:#505050;font-weight:700;letter-spacing:0.864px;right:989.14px;">Get lat/long</span>
<div style="left:380px;top:270px;width:50px;height:620px;background:#fff;"></div>
<div style="left:380px;top:270px;width:25px;height:620px;background:#fbfbfb;"></div>
<div style="left:405px;top:270px;width:16px;height:620px;background:linear-gradient(90deg,#d6d6d6,#e9e9e9 30%,#fff);"></div>
<div style="left:430px;top:280.5px;width:860px;height:640px;background:#fff;border:2px solid #e0e0e0;border-right:none;border-radius:4px 0 0 0;"></div>
<div style="left:431.5px;top:281.5px;width:860px;height:199px;background:#fafafa;border-bottom:2px solid #e0e0e0;"></div>
<div style="left:453px;top:304px;width:850px;height:84.5px;background:#efefef;border:2px solid #dadada;border-radius:5px;"></div>
<div style="left:700px;top:305px;width:2px;height:82.5px;background:#dadada;"></div>
<span class="t" style="top:334.28px;font-size:30.5px;color:#7a7a7a;font-weight:700;left:526px;transform:scaleX(0.8532);transform-origin:0 50%;">GET</span>
<svg style="left:601px;top:336px;" width="32" height="22" viewBox="0 0 32 22"><path d="M3.500 4 L16 16.500 L28.500 4" fill="none" stroke="#ababab" stroke-width="3.700"/></svg>
<span class="t" style="top:336.24px;font-size:27px;color:#444;letter-spacing:0.160px;left:725px;">https://maps.googleapis.com/maps/api/</span>
<span class="t" style="top:336.24px;font-size:27px;color:#444;left:1199.6px;">geocode/json</span>
<span class="t" style="top:429.38px;font-size:26.6px;color:#9b9b9b;letter-spacing:0.522px;left:463px;">Authorization</span>
<span class="t" style="top:429.38px;font-size:26.6px;color:#9b9b9b;letter-spacing:-0.380px;left:690.75px;">Headers</span>
<span class="t" style="top:429.38px;font-size:26.6px;color:#dadada;letter-spacing:-0.542px;left:855.5px;">Body</span>
<span class="t" style="top:429.38px;font-size:26.6px;color:#9b9b9b;letter-spacing:0.011px;left:980px;">Pre-request Script</span>
<div style="left:453px;top:503px;width:850px;height:400px;background:#fff;border-radius:5px 0 0 0;"></div>
<div style="left:557.5px;top:503.5px;width:760px;height:35.2px;background:#e8f2fe;"></div>
<div style="left:453px;top:503px;width:105px;height:400px;background:#ebebeb;border-right:1.300px solid #9a9a9a;border-radius:5px 0 0 0;"></div>
<div style="left:453px;top:503px;width:103.7px;height:35.7px;background:#dadada;border-radius:5px 0 0 0;"></div>
<span class="t" style="top:509.87px;font-size:24.5px;color:#888;font-family:'DejaVu Sans Mono','Liberation Mono',monospace;right:1071.00px;">1</span>
<span class="t" style="top:544.07px;font-size:24.5px;color:#888;font-family:'DejaVu Sans Mono','Liberation Mono',monospace;right:1071.00px;">2</span>
<span class="t" style="top:578.27px;font-size:24.5px;color:#888;font-family:'DejaVu Sans Mono','Liberation Mono',monospace;right:1071.00px;">3</span>
<span class="t" style="top:612.47px;font-size:24.5px;color:#888;font-family:'DejaVu Sans Mono','Liberation Mono',monospace;right:1071.00px;">4</span>
<span class="t" style="top:646.67px;font-size:24.5px;color:#888;font-family:'DejaVu Sans Mono','Liberation Mono',monospace;right:1071.00px;">5</span>
<span class="t" style="top:680.87px;font-size:24.5px;color:#888;font-family:'DejaVu Sans Mono','Liberation Mono',monospace;right:1071.00px;">6</span>
<span class="t" style="top:715.07px;font-size:24.5px;color:#888;font-family:'DejaVu Sans Mono','Liberation Mono',monospace;right:1071.00px;">7</span>
<span class="t" style="top:749.27px;font-size:24.5px;color:#888;font-family:'DejaVu Sans Mono','Liberation Mono',monospace;right:1071.00px;">8</span>
<span class="t" style="top:783.47px;font-size:24.5px;color:#888;font-family:'DejaVu Sans Mono','Liberation Mono',monospace;right:1071.00px;">9</span>
<span class="t" style="top:817.67px;font-size:24.5px;color:#888;font-family:'DejaVu Sans Mono','Liberation Mono',monospace;right:1071.00px;">10</span>
<span class="t" style="top:851.87px;font-size:24.5px;color:#888;font-family:'DejaVu Sans Mono','Liberation Mono',monospace;right:1071.00px;">11</span>
<svg style="left:538.5px;top:587.4px;" width="11" height="7" viewBox="0 0 11 7"><path d="M0.500 0.500 H10.500 L5.500 6.500 Z" fill="#7d7d7d"/></svg>
<svg style="left:538.5px;top:655.8px;" width="11" height="7" viewBox="0 0 11 7"><path d="M0.500 0.500 H10.500 L5.500 6.500 Z" fill="#7d7d7d"/></svg>
<div style="left:568px;top:505px;width:3px;height:32.5px;background:#000;"></div>
<div style="left:628.2px;top:675.0px;width:1.2px;height:68.4px;background:repeating-linear-gradient(#c4c4c4 0 1.500px,transparent 1.500px 3px);"></div>
<div style="left:690.2px;top:709.2px;width:1.2px;height:34.2px;background:repeating-linear-gradient(#c4c4c4 0 1.500px,transparent 1.500px 3px);"></div>
<div style="left:628.2px;top:811.8px;width:1.2px;height:68.4px;background:repeating-linear-gradient(#c4c4c4 0 1.500px,transparent 1.500px 3px);"></div>
<div style="left:690.2px;top:811.8px;width:1.2px;height:68.4px;background:repeating-linear-gradient(#c4c4c4 0 1.500px,transparent 1.500px 3px);"></div>
<span class="t" style="top:508.89px;font-size:25.66px;color:#000;font-family:'DejaVu Sans Mono','Liberation Mono',monospace;left:568.3px;">tests[<span style="color:#2a00ff">'Status Code is 200'</span>] <span style="color:#7f0055">=</span> (responseCode.code <span style="color:#7f0055">===</span> <span style="color:#00007f">200</span>);</span>
<span class="t" style="top:577.29px;font-size:25.66px;color:#000;font-family:'DejaVu Sans Mono','Liberation Mono',monospace;left:568.3px;"><span style="color:#7f0055">if</span> (responseCode.code <span style="color:#7f0055">===</span> <span style="color:#00007f">200</span>) {</span>
<span class="t" style="top:645.69px;font-size:25.66px;color:#000;font-family:'DejaVu Sans Mono','Liberation Mono',monospace;left:568.3px;">    <span style="color:#7f0055">try</span> {</span>
<span class="t" style="top:679.89px;font-size:25.66px;color:#000;font-family:'DejaVu Sans Mono','Liberation Mono',monospace;left:568.3px;">        <span style="color:#8b008b">var</span> location_data <span style="color:#7f0055">=</span> <span style="color:#7f0055">JSON</span>.<span style="color:#3c4c72">parse</span>(responseBody),</span>
<span class="t" style="top:714.09px;font-size:25.66px;color:#000;font-family:'DejaVu Sans Mono','Liberation Mono',monospace;left:568.3px;">            latlong <span style="color:#7f0055">=</span> location_data.results[<span style="color:#00007f">0</span>].geometry</span>
<span class="t" style="top:748.29px;font-size:25.66px;color:#000;font-family:'DejaVu Sans Mono','Liberation Mono',monospace;left:568.3px;">                .lat <span style="color:#7f0055">+</span> <span style="color:#2a00ff">","</span> <span style="color:#7f0055">+</span> location_data.results[<span style="color:#00007f">0</span>].geometry</span>
<span class="t" style="top:782.49px;font-size:25.66px;color:#000;font-family:'DejaVu Sans Mono','Liberation Mono',monospace;left:568.3px;">                .location.lng,</span>
<span class="t" style="top:816.69px;font-size:25.66px;color:#000;font-family:'DejaVu Sans Mono','Liberation Mono',monospace;left:568.3px;">            formatted_address <span style="color:#7f0055">=</span> location_data.results[<span style="color:#00007f">0</span>]</span>
<span class="t" style="top:850.89px;font-size:25.66px;color:#000;font-family:'DejaVu Sans Mono','Liberation Mono',monospace;left:568.3px;">                .formatted_address;</span>
</div></div></div></div></div></div>
<div id="over"><span class="t" style="left:-231.70000000000005px;top:4.89px;font-size:25.66px;color:#000;font-family:'DejaVu Sans Mono','Liberation Mono',monospace;">                .formatted_address;</span></div>
</body></html>
